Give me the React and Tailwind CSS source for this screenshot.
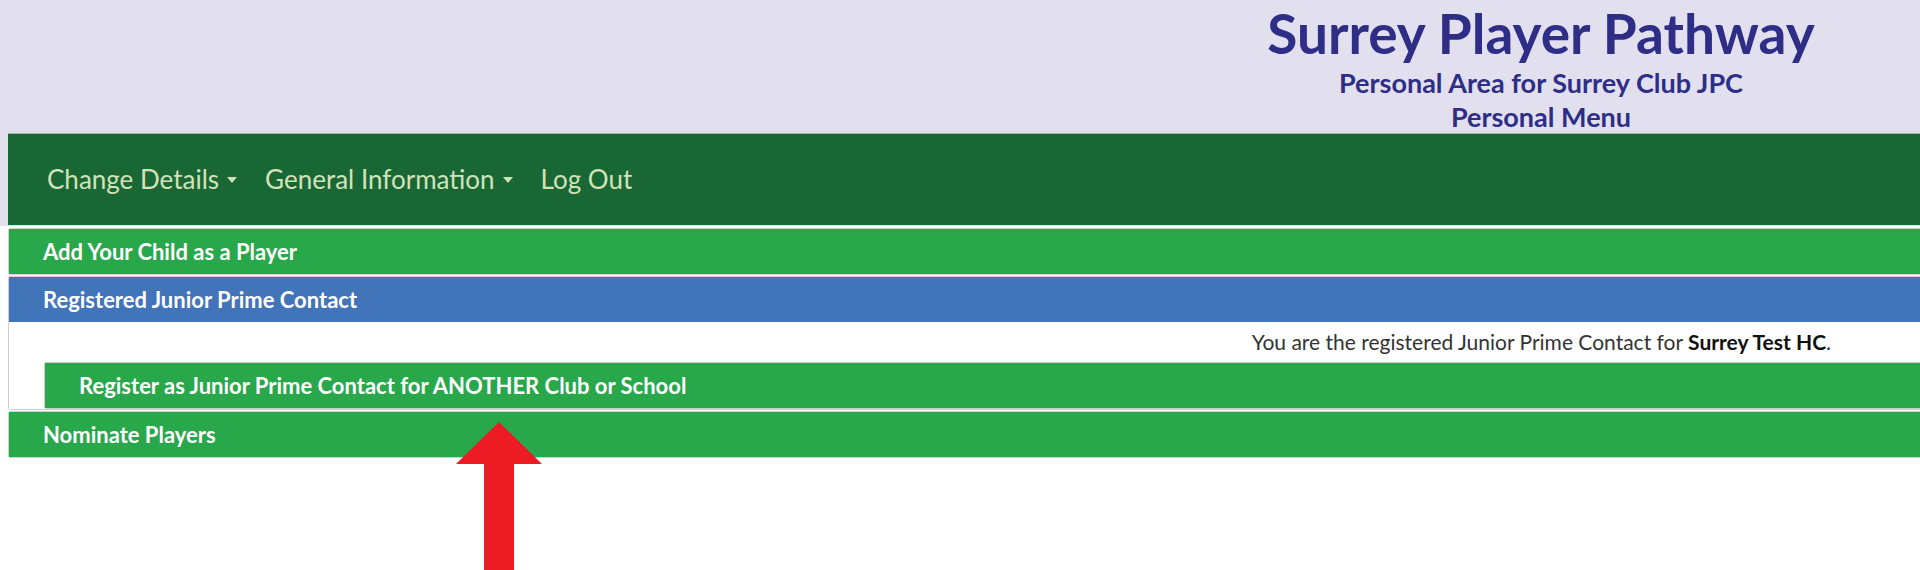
import React from "react";

const font = { fontFamily: "Lato, 'Open Sans', Arial, sans-serif" };

function Caret() {
  return (
    <span className="ml-[8px] inline-block h-0 w-0 border-x-[5px] border-t-[6px] border-x-transparent border-t-current" />
  );
}

function CardHeader({ color, children, className = "" }) {
  return (
    <div
      className={`flex h-[45px] items-center pl-[34px] text-[22px] font-bold text-white ${color} ${className}`}
    >
      {children}
    </div>
  );
}

export default function App() {
  return (
    <div className="relative h-[570px] w-[1920px] overflow-hidden bg-white" style={font}>
      {/* Top banner + navbar share the lavender background */}
      <div className="bg-[#e2e0ef] pb-[1px]">
        <header className="flex h-[133px] justify-end">
          <div className="flex w-[758px] flex-col items-center text-[#2e2e86]">
            <h1 className="text-[55px] font-bold leading-[66px]">Surrey Player Pathway</h1>
            <p className="text-[27px] font-bold leading-[33px]">
              Personal Area for Surrey Club JPC
            </p>
            <p className="mt-[1px] text-[27px] font-bold leading-[33px]">Personal Menu</p>
          </div>
        </header>

        <nav className="ml-2 flex h-[92px] items-center gap-[28px] border-t border-[#9fb3a3] bg-[#186735] pl-[39px] text-[26px] text-[#d3e2b9]">
          <span className="flex items-center">
            Change Details
            <Caret />
          </span>
          <span className="flex items-center">
            General Information
            <Caret />
          </span>
          <span>Log Out</span>
        </nav>
      </div>

      {/* Accordion of sections */}
      <div className="ml-2 mt-[2px] flex flex-col gap-[1px]">
        <div className="rounded-l-[3px] border border-r-0 border-[#cfcfcf]">
          <CardHeader color="bg-[#28a74b]">Add Your Child as a Player</CardHeader>
        </div>

        <div className="rounded-l-[3px] border border-r-0 border-[#cfcfcf]">
          <CardHeader color="bg-[#4274b9]">Registered Junior Prime Contact</CardHeader>
          <div className="bg-white">
            <p className="flex h-[40px] items-center justify-end pr-[89px] text-[21px] text-[#333]">
              <span>
                You are the registered Junior Prime Contact for{" "}
                <b className="text-[#111]">Surrey Test HC</b>.
              </span>
            </p>
            <div className="ml-[35px] rounded-l-[3px] border border-r-0 border-[#cfcfcf]">
              <CardHeader color="bg-[#28a74b]" className="pl-[31px]">
                Register as Junior Prime Contact for ANOTHER Club or School
              </CardHeader>
            </div>
          </div>
        </div>

        <div className="rounded-l-[3px] border border-r-0 border-[#cfcfcf]">
          <CardHeader color="bg-[#28a74b]">Nominate Players</CardHeader>
        </div>
      </div>

      {/* Red annotation arrow */}
      <svg
        className="absolute left-[456px] top-[422px]"
        width="86"
        height="148"
        viewBox="0 0 86 148"
      >
        <polygon points="43,0 86,42 58,42 58,148 28,148 28,42 0,42" fill="#ed1c24" />
      </svg>
    </div>
  );
}
